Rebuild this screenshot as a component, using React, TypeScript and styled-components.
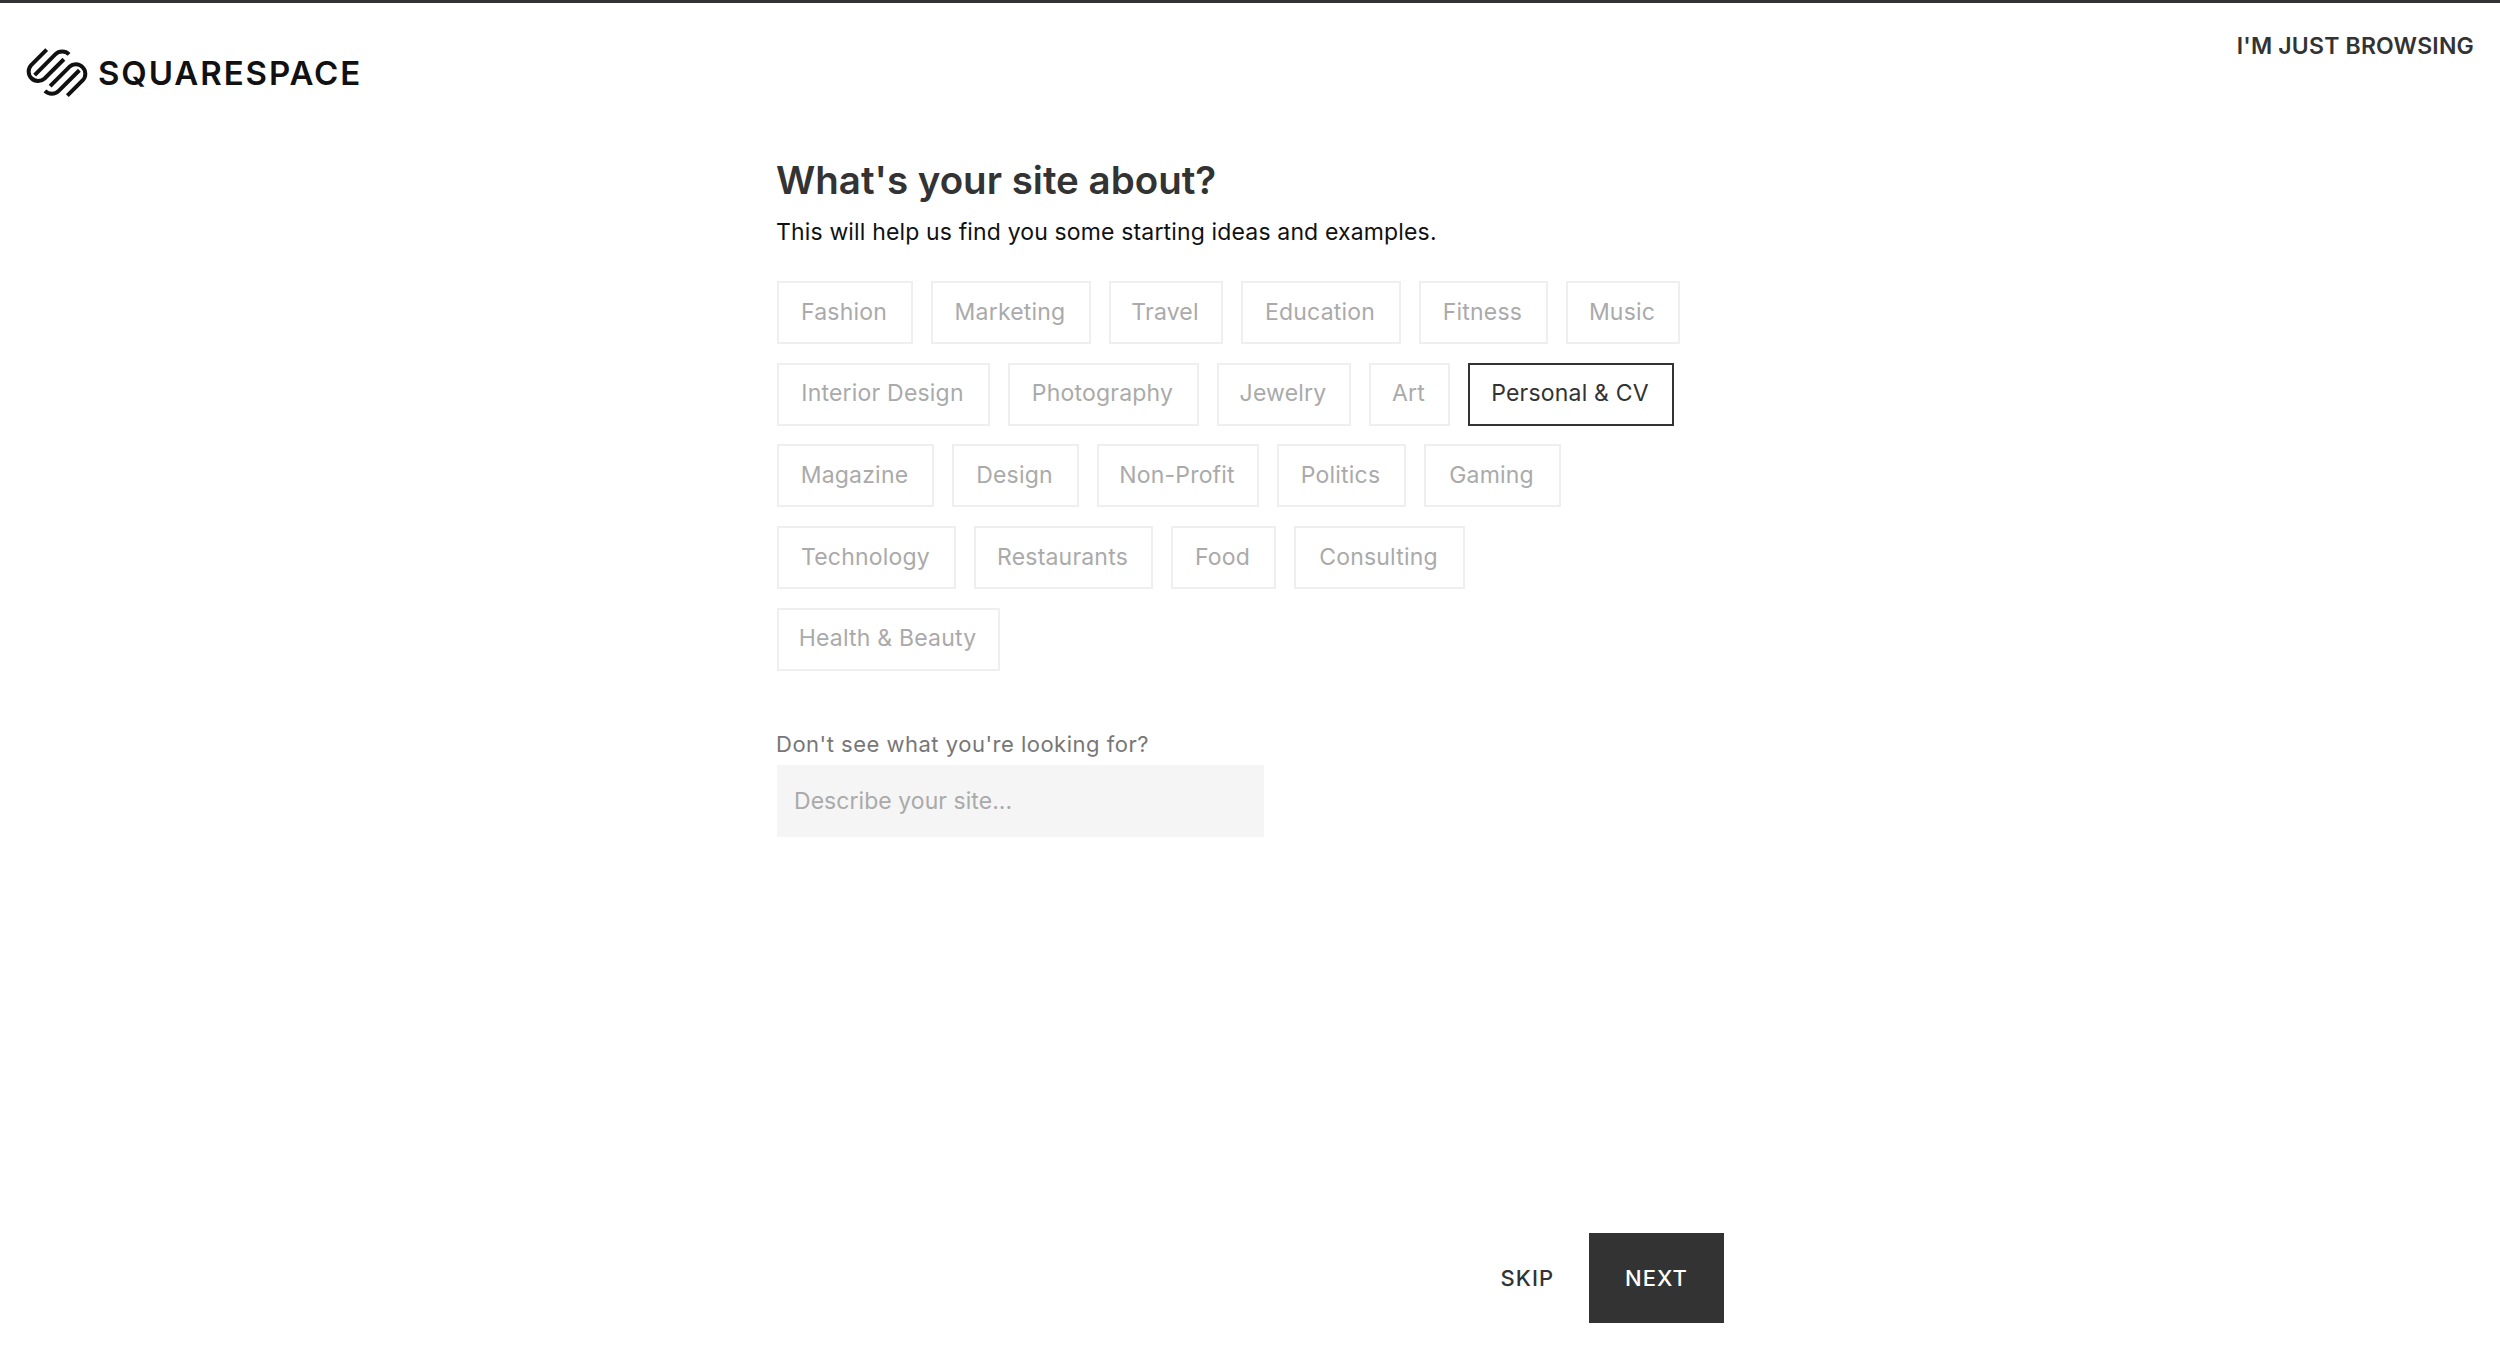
import React from 'react';
import styled, { createGlobalStyle } from 'styled-components';

const GlobalStyle = createGlobalStyle`
  html, body {
    margin: 0;
    padding: 0;
    background: #fff;
    font-family: Inter, "Liberation Sans", sans-serif;
  }
  * {
    box-sizing: border-box;
  }
`;

const Page = styled.div`
  display: flex;
  flex-direction: column;
  height: 100vh;
  border-top: 3px solid #333336;
  overflow: hidden;
`;

const Header = styled.header`
  display: flex;
  justify-content: space-between;
  align-items: flex-start;
  height: 154px;
  padding: 0 26px 0 25px;
`;

const Logo = styled.div`
  display: flex;
  align-items: center;
  gap: 9px;
  margin-top: 44px;
`;

const LogoText = styled.span`
  font-size: 33px;
  font-weight: 600;
  letter-spacing: 1.9px;
  line-height: 52px;
  color: #111;
`;

const BrowseLink = styled.a`
  margin-top: 27px;
  font-size: 23px;
  font-weight: 600;
  letter-spacing: 0.2px;
  line-height: 32px;
  color: #333;
`;

const Main = styled.main`
  flex: 1;
  width: 948px;
  margin: 0 auto;
  display: flex;
  flex-direction: column;
`;

const Title = styled.h1`
  margin: 0;
  font-size: 38.5px;
  font-weight: 600;
  line-height: 46px;
  color: #333;
`;

const Subtitle = styled.p`
  margin: 13px 0 0;
  font-size: 23px;
  letter-spacing: 0.15px;
  line-height: 32px;
  color: #111;
`;

const ChipList = styled.div`
  display: flex;
  flex-direction: column;
  gap: 18.7px;
  margin: 33px 0 0 1px;
`;

const ChipRow = styled.div`
  display: flex;
  gap: 18px;
`;

const Chip = styled.button<{ $selected?: boolean; $width: number }>`
  width: ${props => props.$width}px;
  height: 63px;
  padding: 0 2px 2px 0;
  background: #fff;
  font-family: inherit;
  font-size: 23px;
  letter-spacing: 0.2px;
  border: 2px solid ${props => (props.$selected ? '#333' : '#efefef')};
  color: ${props => (props.$selected ? '#333' : '#aaa')};
`;

const Label = styled.label`
  margin-top: 58px;
  font-size: 22px;
  line-height: 30px;
  letter-spacing: 0.5px;
  color: #777;
`;

const DescribeInput = styled.input`
  width: 487px;
  height: 72px;
  margin: 6px 0 0 1px;
  padding: 0 17px;
  border: 0;
  background: #f5f5f5;
  font-family: inherit;
  font-size: 23px;
  letter-spacing: 0.05px;
  &::placeholder {
    color: #aaa;
    opacity: 1;
  }
`;

const Footer = styled.footer`
  display: flex;
  justify-content: flex-end;
  align-items: center;
  gap: 35px;
  margin-top: auto;
  margin-bottom: 39px;
`;

const SkipButton = styled.button`
  padding: 0;
  border: 0;
  background: none;
  font-family: inherit;
  font-size: 22px;
  font-weight: 500;
  letter-spacing: 1px;
  color: #333;
`;

const NextButton = styled.button`
  width: 135px;
  height: 90px;
  border: 0;
  background: #333;
  font-family: inherit;
  font-size: 22px;
  font-weight: 500;
  letter-spacing: 1px;
  color: #fff;
`;

const rows = [
  [
    { name: 'Fashion', width: 136 },
    { name: 'Marketing', width: 160 },
    { name: 'Travel', width: 114 },
    { name: 'Education', width: 160 },
    { name: 'Fitness', width: 129 },
    { name: 'Music', width: 114 },
  ],
  [
    { name: 'Interior Design', width: 213 },
    { name: 'Photography', width: 191 },
    { name: 'Jewelry', width: 134 },
    { name: 'Art', width: 81 },
    { name: 'Personal & CV', width: 206 },
  ],
  [
    { name: 'Magazine', width: 157 },
    { name: 'Design', width: 127 },
    { name: 'Non-Profit', width: 162 },
    { name: 'Politics', width: 129 },
    { name: 'Gaming', width: 137 },
  ],
  [
    { name: 'Technology', width: 179 },
    { name: 'Restaurants', width: 179 },
    { name: 'Food', width: 105 },
    { name: 'Consulting', width: 171 },
  ],
  [{ name: 'Health & Beauty', width: 223 }],
];

const LogoHalf = () => (
  <>
    <path d="M95 33 L50 78 A27.6 27.6 0 0 0 89 117 L145 61" />
    <path d="M60 107 L120 47 A28 28 0 0 1 160 47" />
  </>
);

const LogoMark = () => (
  <svg width="64" height="52" viewBox="32 26 186 150" fill="none" stroke="#111" strokeWidth="11.5">
    <LogoHalf />
    <g transform="rotate(180 125 100)">
      <LogoHalf />
    </g>
  </svg>
);

const App: React.FC = () => {
  return (
    <Page>
      <GlobalStyle />
      <Header>
        <Logo>
          <LogoMark />
          <LogoText>SQUARESPACE</LogoText>
        </Logo>
        <BrowseLink>I'M JUST BROWSING</BrowseLink>
      </Header>
      <Main>
        <Title>What's your site about?</Title>
        <Subtitle>This will help us find you some starting ideas and examples.</Subtitle>
        <ChipList>
          {rows.map((row, i) => (
            <ChipRow key={i}>
              {row.map(chip => (
                <Chip key={chip.name} $width={chip.width} $selected={chip.name === 'Personal & CV'}>
                  {chip.name}
                </Chip>
              ))}
            </ChipRow>
          ))}
        </ChipList>
        <Label>Don't see what you're looking for?</Label>
        <DescribeInput placeholder="Describe your site..." />
        <Footer>
          <SkipButton>SKIP</SkipButton>
          <NextButton>NEXT</NextButton>
        </Footer>
      </Main>
    </Page>
  );
};

export default App;
